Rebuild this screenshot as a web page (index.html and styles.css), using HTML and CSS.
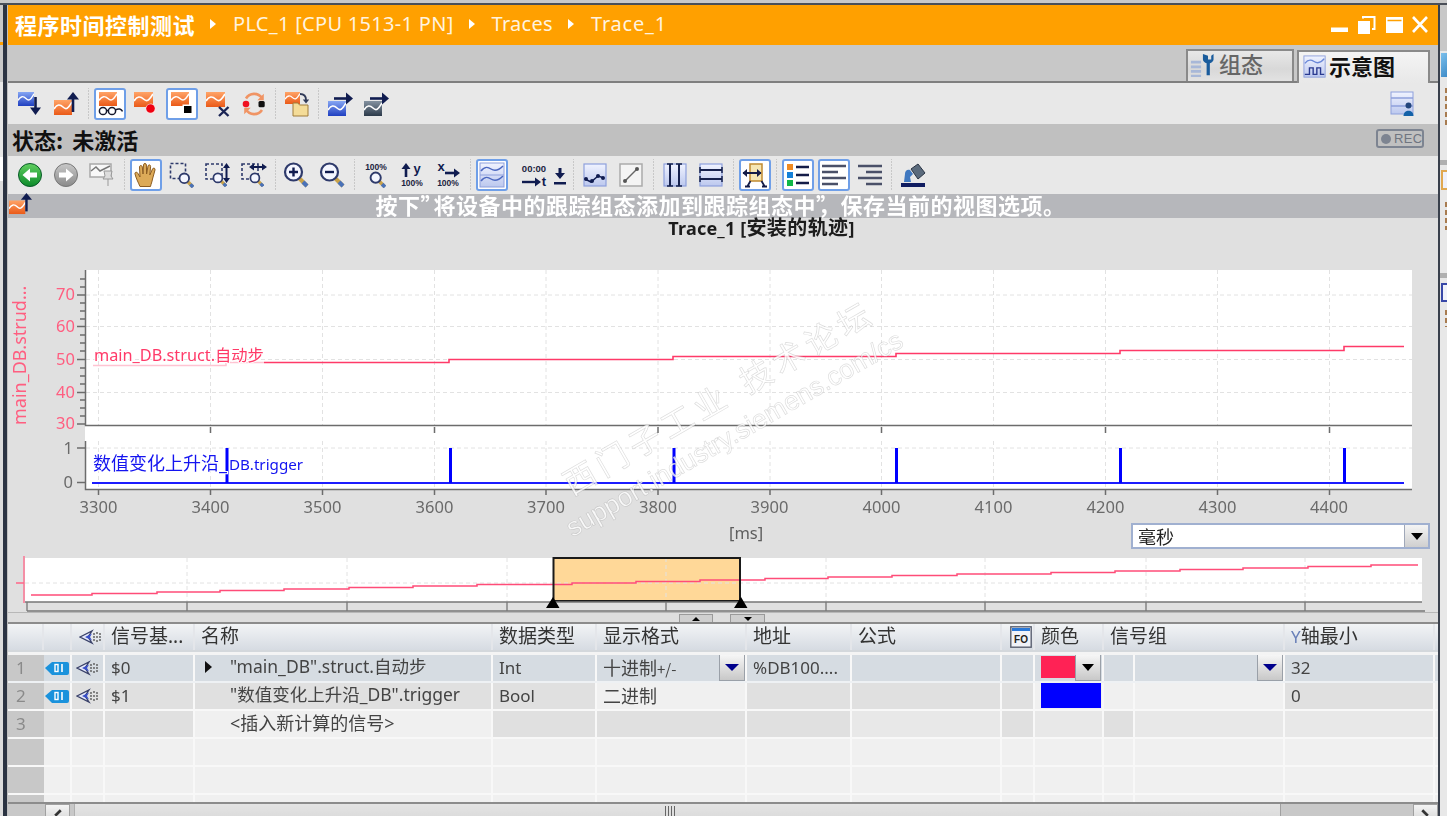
FILE: index.html
```html
<!DOCTYPE html>
<html lang="zh-CN">
<head>
<meta charset="utf-8">
<title>Trace_1</title>
<link rel="stylesheet" href="styles.css">
</head>
<body>
<svg class="sprite" aria-hidden="true">
  <defs>
    <linearGradient id="go" x1="0" y1="0" x2="0" y2="1"><stop offset="0" stop-color="#ffa468"/><stop offset="1" stop-color="#ea5a18"/></linearGradient>
    <linearGradient id="gb" x1="0" y1="0" x2="0" y2="1"><stop offset="0" stop-color="#86a6f4"/><stop offset="1" stop-color="#1f3fc0"/></linearGradient>
    <linearGradient id="gd" x1="0" y1="0" x2="0" y2="1"><stop offset="0" stop-color="#8492a0"/><stop offset="1" stop-color="#2c3a4a"/></linearGradient>
    <linearGradient id="gl" x1="0" y1="0" x2="0" y2="1"><stop offset="0" stop-color="#f0f3ff"/><stop offset="1" stop-color="#bcc8ee"/></linearGradient>
    <linearGradient id="gg" x1="0" y1="0" x2="0" y2="1"><stop offset="0" stop-color="#62d060"/><stop offset="1" stop-color="#0c8a2a"/></linearGradient>
    <linearGradient id="gy" x1="0" y1="0" x2="0" y2="1"><stop offset="0" stop-color="#c8c8c8"/><stop offset="1" stop-color="#8a8a8a"/></linearGradient>
  </defs>
  <symbol id="co" viewBox="0 0 18 15" preserveAspectRatio="none"><rect width="18" height="15" fill="url(#go)"/><path d="M0 9C3 4 6 4 9 7s5 2 9-5" fill="none" stroke="#fff" stroke-width="1.6"/></symbol>
  <symbol id="cb" viewBox="0 0 18 15" preserveAspectRatio="none"><rect width="18" height="15" fill="url(#gb)"/><path d="M0 9C3 4 6 4 9 7s5 2 9-5" fill="none" stroke="#fff" stroke-width="1.6"/></symbol>
  <symbol id="cd" viewBox="0 0 18 15" preserveAspectRatio="none"><rect width="18" height="15" fill="url(#gd)"/><path d="M0 9C3 4 6 4 9 7s5 2 9-5" fill="none" stroke="#fff" stroke-width="1.6"/></symbol>
  <symbol id="mag" viewBox="0 0 14 14"><path d="M8.6 8.6l4.4 4.4" stroke="#c8a24a" stroke-width="3"/><path d="M10.8 10.8l2.4 2.4" stroke="#4a72b8" stroke-width="3"/><circle cx="5.5" cy="5.5" r="4.2" fill="#f4f6ff" stroke="#2e3a6b" stroke-width="1.6"/></symbol>

  <symbol id="i-load" viewBox="0 0 26 26"><use href="#cb" x="1" y="1" width="16" height="14"/><path d="M18.5 6v13" stroke="#101c50" stroke-width="2.6"/><path d="M13 16.5h11l-5.500 7.500z" fill="#101c50"/></symbol>
  <symbol id="i-up" viewBox="0 0 26 26"><use href="#co" x="1" y="9" width="18" height="15"/><path d="M20 7v14" stroke="#101c50" stroke-width="2.600"/><path d="M14 8.500h12L20 1z" fill="#101c50"/></symbol>
  <symbol id="i-glass" viewBox="0 0 26 26"><use href="#co" x="2" y="1" width="18" height="14"/><g fill="#fff" stroke="#15182c" stroke-width="1.500"><circle cx="6" cy="20" r="3.600"/><circle cx="15" cy="20" r="3.600"/></g><path d="M9.500 19.500h2M18.500 19c3-2 6-1 7 1.500" fill="none" stroke="#15182c" stroke-width="1.500"/></symbol>
  <symbol id="i-rec" viewBox="0 0 26 26"><use href="#co" x="1" y="1" width="19" height="15"/><circle cx="18" cy="18" r="5.500" fill="#f4e4e4"/><circle cx="17.500" cy="17.500" r="4.300" fill="#f00010"/></symbol>
  <symbol id="i-stop" viewBox="0 0 26 26"><use href="#co" x="2" y="1" width="18" height="14"/><rect x="13.500" y="13.500" width="10" height="9" fill="#fff"/><rect x="15" y="15" width="7.500" height="7" fill="#000"/></symbol>
  <symbol id="i-del" viewBox="0 0 26 26"><use href="#co" x="1" y="1" width="19" height="15"/><path d="M14 16l9.500 9M23.500 16L14 25" stroke="#1a2454" stroke-width="2.400"/></symbol>
  <symbol id="i-cycle" viewBox="0 0 26 26"><g fill="none" stroke="#f09464" stroke-width="2.600"><path d="M5 7.500A9.500 9.500 0 0 1 21 7"/><path d="M21 19A9.500 9.500 0 0 1 5 18.500"/></g><path d="M22.800 2.800v6.500h-6.500zM3.200 23.200v-6.500h6.500z" fill="#f09464"/><circle cx="5" cy="13" r="3.300" fill="#f01020"/><rect x="17.500" y="10" width="6.200" height="6.200" rx="1.500" fill="#111"/></symbol>
  <symbol id="i-folder" viewBox="0 0 26 26"><use href="#co" x="2" y="1" width="15" height="12"/><path d="M10 12h5l1.500 2H25v11H10z" fill="#f4dc98" stroke="#a07c3a"/><path d="M17 3c4 0 6 2 6 6" fill="none" stroke="#303a58" stroke-width="1.800"/><path d="M19.800 8.500h6.400L23 12.500z" fill="#303a58"/></symbol>
  <symbol id="i-bout" viewBox="0 0 26 26"><use href="#cb" x="1" y="10" width="18" height="15"/><path d="M7 7.500h14" stroke="#101c50" stroke-width="2.600"/><path d="M19 1.500L26 7.500l-7 6z" fill="#101c50"/></symbol>
  <symbol id="i-dout" viewBox="0 0 26 26"><use href="#cd" x="1" y="10" width="18" height="15"/><path d="M7 7.500h14" stroke="#101c50" stroke-width="2.600"/><path d="M19 1.500L26 7.500l-7 6z" fill="#101c50"/></symbol>
  <symbol id="i-layout" viewBox="0 0 26 26"><rect x="1" y="1" width="22" height="22" fill="url(#gl)" stroke="#8ea0dc"/><path d="M1 7h22M1 15h22" stroke="#8ea0dc" stroke-width="1.500"/><circle cx="18.500" cy="14.500" r="3" fill="#23457c"/><path d="M13.500 25c0-7 10-7 10 0z" fill="#1462a8"/></symbol>

  <symbol id="i-back" viewBox="0 0 26 26"><circle cx="13" cy="13" r="11.500" fill="url(#gg)" stroke="#0a5a2a" stroke-width="1"/><path d="M20 10.500h-7V6.500l-7.500 6.500 7.500 6.500v-4h7z" fill="#fff"/></symbol>
  <symbol id="i-fwd" viewBox="0 0 26 26"><circle cx="13" cy="13" r="11.500" fill="url(#gy)" stroke="#777" stroke-width="1"/><path d="M6 10.500h7V6.500l7.500 6.500-7.500 6.500v-4H6z" fill="#fff"/></symbol>
  <symbol id="i-pin" viewBox="0 0 26 26"><rect x="1" y="2" width="21" height="13" fill="#f8f8f8" stroke="#a8a8a8" stroke-width="1.500"/><path d="M2 9l5-4 4 4 4-2 6-3" fill="none" stroke="#777" stroke-width="1.500"/><path d="M15 9h8l-1 5 2 3H14l2-3zM19 17v7" fill="#ddd" stroke="#999"/></symbol>
  <symbol id="i-hand" viewBox="0 0 26 26"><path d="M7 24.500C5 20 3 16 2 12c-.5-2 2-2.500 3-.5L7 15 6.500 5c0-2 2.500-2 2.800 0L10 12l.5-9.200c.2-1.800 2.800-1.800 2.900.2l.2 9L15 4c.4-1.700 2.800-1.400 2.600.6L16.800 13l2.700-6c.7-1.600 2.900-1 2.500 1l-2.500 9c-.5 3-1.500 5-2 7.500z" fill="#dcaa58" stroke="#8c5c20" stroke-width="1"/></symbol>
  <symbol id="i-zbox" viewBox="0 0 26 26"><rect x="1.500" y="1.500" width="15" height="15" fill="none" stroke="#2e3a6b" stroke-width="1.600" stroke-dasharray="3 2"/><use href="#mag" x="9" y="10" width="16" height="16"/></symbol>
  <symbol id="i-zy" viewBox="0 0 26 26"><rect x="1" y="2" width="16" height="15" fill="none" stroke="#2e3a6b" stroke-width="1.600" stroke-dasharray="3 2"/><use href="#mag" x="7" y="10" width="15" height="15"/><path d="M21.500 4v14" stroke="#101c50" stroke-width="2"/><path d="M18 6l3.500-5 3.500 5zM18 16l3.500 5 3.500-5z" fill="#101c50"/></symbol>
  <symbol id="i-zx" viewBox="0 0 26 26"><rect x="1" y="2" width="16" height="15" fill="none" stroke="#2e3a6b" stroke-width="1.600" stroke-dasharray="3 2"/><use href="#mag" x="8" y="10" width="15" height="15"/><path d="M11 5h13" stroke="#101c50" stroke-width="2"/><path d="M13 1.500L8 5l5 3.500zM21 1.500L26 5l-5 3.500z" fill="#101c50"/></symbol>
  <symbol id="i-zin" viewBox="0 0 26 26"><path d="M16 16l8 8" stroke="#c8a24a" stroke-width="4"/><path d="M20 20l4 4" stroke="#4a72b8" stroke-width="4"/><circle cx="10.500" cy="10" r="8.500" fill="#f4f6ff" stroke="#2e3a6b" stroke-width="2.200"/><path d="M6 10h9M10.500 5.500v9" stroke="#101c50" stroke-width="2.400"/></symbol>
  <symbol id="i-zout" viewBox="0 0 26 26"><path d="M16 16l8 8" stroke="#c8a24a" stroke-width="4"/><path d="M20 20l4 4" stroke="#4a72b8" stroke-width="4"/><circle cx="10.500" cy="10" r="8.500" fill="#f4f6ff" stroke="#2e3a6b" stroke-width="2.200"/><path d="M6 10h9" stroke="#101c50" stroke-width="2.400"/></symbol>
  <symbol id="i-wave" viewBox="0 0 26 26"><rect x="1" y="1" width="24" height="24" fill="url(#gl)" stroke="#8ea0dc"/><path d="M2 9c4-5 7-4 10-2s7 2 12-3M2 19c4-5 7-4 10-2s7 2 12-3" fill="none" stroke="#4c68c0" stroke-width="1.500"/><path d="M1 13h24" stroke="#8ea0dc"/></symbol>
  <symbol id="i-dl" viewBox="0 0 14 26"><path d="M7 6v8" stroke="#101c50" stroke-width="3"/><path d="M2 11h10l-5 6zM1 20h12v2.500H1z" fill="#101c50"/></symbol>
  <symbol id="i-pts" viewBox="0 0 26 26"><rect x="2" y="2" width="22" height="22" fill="url(#gl)" stroke="#8ea0dc" stroke-width="1.200"/><path d="M3 17l6 3 7-6 6 2" fill="none" stroke="#101c50" stroke-width="1.500"/><circle cx="4" cy="17" r="2" fill="#101c50"/><circle cx="10" cy="19" r="2" fill="#101c50"/><circle cx="16" cy="14" r="2" fill="#101c50"/><circle cx="21" cy="16" r="2" fill="#101c50"/></symbol>
  <symbol id="i-line" viewBox="0 0 26 26"><rect x="2" y="2" width="22" height="22" fill="#f4f4f4" stroke="#aaa" stroke-width="1.500"/><path d="M7 19L19 7" stroke="#666" stroke-width="1.500"/><circle cx="7" cy="19" r="2" fill="#555"/><circle cx="19" cy="7" r="2" fill="#555"/></symbol>
  <symbol id="i-vr" viewBox="0 0 26 26"><rect x="2" y="2" width="22" height="22" fill="url(#gl)" stroke="#8ea0dc" stroke-width="1.200"/><path d="M8 2v22M17 2v22" stroke="#15204c" stroke-width="2"/><path d="M5 2h6M5 24h6M14 2h6M14 24h6" stroke="#15204c" stroke-width="1.500"/></symbol>
  <symbol id="i-hr" viewBox="0 0 26 26"><rect x="2" y="2" width="22" height="22" fill="url(#gl)" stroke="#8ea0dc" stroke-width="1.200"/><path d="M2 8h22M2 17h22" stroke="#15204c" stroke-width="2"/><path d="M2 5v6M24 5v6M2 14v6M24 14v6" stroke="#15204c" stroke-width="1.500"/></symbol>
  <symbol id="i-move" viewBox="0 0 26 26"><path d="M8 2h12v17H8z" fill="#f6e6b4" stroke="#c08a30" stroke-width="1.500"/><path d="M1 11h18" stroke="#141c48" stroke-width="2"/><path d="M5 7l-4.500 4L5 15zM15 7l4.500 4L15 15z" fill="#141c48"/><path d="M5 25l3.500-6M23 25l-3.500-6M3 24.500h5M20 24.500h5" stroke="#141c48" stroke-width="1.800"/></symbol>
  <symbol id="i-list" viewBox="0 0 26 26"><rect x="2" y="2" width="6" height="6" fill="#f08a20"/><rect x="2" y="10" width="6" height="6" fill="#1480d8"/><rect x="2" y="18" width="6" height="6" fill="#10b848"/><path d="M11 5h13M11 13h13M11 21h13" stroke="#141c48" stroke-width="2.600"/></symbol>
  <symbol id="i-al" viewBox="0 0 26 26"><path d="M1 4h24M1 10h16M1 16h24M1 22h16" stroke="#4a5068" stroke-width="2.400"/></symbol>
  <symbol id="i-ar" viewBox="0 0 26 26"><path d="M1 4h24M9 10h16M1 16h24M9 22h16" stroke="#4a5068" stroke-width="2.400"/></symbol>
  <symbol id="i-paint" viewBox="0 0 26 26"><path d="M11 7l7-5 7 9-7 6z" fill="#5a6a7c" stroke="#2a3444"/><path d="M5 12c0-3 2-5 5-4l3 4-3 3 1 5H4z" fill="#3f78c0"/><rect x="1" y="21" width="24" height="4" fill="#101c60"/></symbol>

  <symbol id="i-conf" viewBox="0 0 26 26"><path d="M1 10h11M1 15h11M1 20h11M1 25h11" stroke="#a8b8d8" stroke-width="3"/><path d="M14 1v6c0 2 2 3.500 4 4v13h3.500V11c2-.5 4-2 4-4V1l-2.500 2v4h-3.500V3z" fill="#1a5c9c"/></symbol>
  <symbol id="i-sch" viewBox="0 0 26 26"><rect x="1" y="1" width="23" height="23" fill="url(#gl)" stroke="#8ea0dc"/><path d="M2 9c4-5 7-4 10-2s7 2 11-3" fill="none" stroke="#6a88d8" stroke-width="1.500"/><path d="M2 21h5v-7h4v7h4v-7h4v7h4" fill="none" stroke="#2a3a90" stroke-width="1.500"/></symbol>
  <symbol id="i-tag" viewBox="0 0 24 14"><path d="M0 7l7-6h15a2 2 0 0 1 2 2v9a2 2 0 0 1-2 2H7z" fill="#1a92dc"/><rect x="10" y="3.500" width="3" height="7" fill="none" stroke="#fff" stroke-width="1.400"/><path d="M17 3v8" stroke="#fff" stroke-width="1.600"/></symbol>
  <symbol id="i-cast" viewBox="0 0 24 16"><path d="M1 8l12-6-4 6 4 6z" fill="#e4e8fa" stroke="#384068" stroke-width="1.300"/><path d="M6 8l7-3.500-2 3.500 2 3.500z" fill="#3a50c8"/><g fill="#555"><circle cx="15" cy="5" r=".9"/><circle cx="15" cy="8" r=".9"/><circle cx="15" cy="11" r=".9"/><circle cx="18" cy="4" r=".9"/><circle cx="18" cy="8" r=".9"/><circle cx="18" cy="12" r=".9"/><circle cx="21" cy="5" r=".9"/><circle cx="21" cy="8" r=".9"/><circle cx="21" cy="11" r=".9"/></g></symbol>
</svg>

<div class="top-strip"></div>
<div class="shell">
  <div class="rail-left">
    <div class="rl-a"></div><div class="rl-b"></div><div class="rl-c"></div><div class="rl-d"></div><div class="rl-e"></div><div class="rl-f"></div>
  </div>

  <main class="main">
    <header class="titlebar">
      <span class="t-main">程序时间控制测试</span><i class="crumb-sep"></i><span class="t-crumb">PLC_1 [CPU 1513-1 PN]</span><i class="crumb-sep"></i><span class="t-crumb">Traces</span><i class="crumb-sep"></i><span class="t-crumb t-last">Trace_1</span>
      <svg class="winctl" viewBox="0 0 98 18" width="98" height="18"><path d="M0 11.500h17V16H0z" fill="#fff"/><path d="M27 5h12v13H27z" fill="#fff"/><path d="M32 2.500V1h11.500v12H41" fill="none" stroke="#fff" stroke-width="2"/><path d="M55 1h17v16H55z" fill="#fff"/><path d="M56.500 4.500h14" stroke="#ffa000" stroke-width="1.500"/><path d="M82 1l14 15M96 1L82 16" stroke="#fff" stroke-width="2.600"/></svg>
    </header>

    <nav class="tabs">
      <div class="tab"><svg class="tab-ic"><use href="#i-conf"/></svg>组态</div>
      <div class="tab tab-on"><svg class="tab-ic"><use href="#i-sch"/></svg>示意图</div>
    </nav>

    <div class="tools t1">
      <span class="tb"><svg><use href="#i-load"/></svg></span>
      <span class="tb"><svg><use href="#i-up"/></svg></span>
      <i class="sep"></i>
      <span class="tb on"><svg><use href="#i-glass"/></svg></span>
      <span class="tb"><svg><use href="#i-rec"/></svg></span>
      <span class="tb on"><svg><use href="#i-stop"/></svg></span>
      <span class="tb"><svg><use href="#i-del"/></svg></span>
      <span class="tb"><svg><use href="#i-cycle"/></svg></span>
      <i class="sep s6"></i>
      <span class="tb"><svg><use href="#i-folder"/></svg></span>
      <i class="sep"></i>
      <span class="tb"><svg><use href="#i-bout"/></svg></span>
      <span class="tb"><svg><use href="#i-dout"/></svg></span>
      <span class="tb tb-end"><svg><use href="#i-layout"/></svg></span>
    </div>

    <div class="status">
      <span class="st-text">状态: 未激活</span>
      <span class="rec"><i class="rec-dot"></i>REC</span>
    </div>

    <div class="tools t2">
      <span class="tb"><svg><use href="#i-back"/></svg></span>
      <span class="tb"><svg><use href="#i-fwd"/></svg></span>
      <span class="tb"><svg><use href="#i-pin"/></svg></span>
      <i class="sep"></i>
      <span class="tb on"><svg><use href="#i-hand"/></svg></span>
      <span class="tb"><svg><use href="#i-zbox"/></svg></span>
      <span class="tb"><svg><use href="#i-zy"/></svg></span>
      <span class="tb"><svg><use href="#i-zx"/></svg></span>
      <i class="sep s6"></i>
      <span class="tb"><svg><use href="#i-zin"/></svg></span>
      <span class="tb"><svg><use href="#i-zout"/></svg></span>
      <i class="sep"></i>
      <span class="tb"><svg viewBox="0 0 26 26"><text x="13" y="8" class="ic-t">100%</text><use href="#mag" x="6" y="9" width="17" height="17"/></svg></span>
      <span class="tb"><svg viewBox="0 0 26 26"><text x="13" y="24" class="ic-t">100%</text><path d="M7 5v10" stroke="#101c50" stroke-width="2.600"/><path d="M2.500 7L7 1l4.500 6z" fill="#101c50"/><text x="18" y="11" class="ic-l">y</text></svg></span>
      <span class="tb"><svg viewBox="0 0 26 26"><text x="13" y="24" class="ic-t">100%</text><path d="M10 11h11" stroke="#101c50" stroke-width="2.600"/><path d="M19 6.500l6 4.500-6 4.500z" fill="#101c50"/><text x="6" y="9" class="ic-l">x</text></svg></span>
      <i class="sep"></i>
      <span class="tb on"><svg><use href="#i-wave"/></svg></span>
      <span class="tb tb-time"><svg viewBox="0 0 26 26"><text x="13" y="10" class="ic-t ic-w">00:00</text><path d="M1 20h15" stroke="#101c50" stroke-width="2.400"/><path d="M14 15.500l6 4.500-6 4.500z" fill="#101c50"/><text x="23" y="24" class="ic-l">t</text></svg><svg class="dl"><use href="#i-dl"/></svg></span>
      <i class="sep"></i>
      <span class="tb"><svg><use href="#i-pts"/></svg></span>
      <span class="tb"><svg><use href="#i-line"/></svg></span>
      <i class="sep"></i>
      <span class="tb"><svg><use href="#i-vr"/></svg></span>
      <span class="tb"><svg><use href="#i-hr"/></svg></span>
      <i class="sep"></i>
      <span class="tb on"><svg><use href="#i-move"/></svg></span>
      <i class="sep s7"></i>
      <span class="tb on"><svg><use href="#i-list"/></svg></span>
      <span class="tb on"><svg><use href="#i-al"/></svg></span>
      <span class="tb"><svg><use href="#i-ar"/></svg></span>
      <i class="sep s7"></i>
      <span class="tb"><svg><use href="#i-paint"/></svg></span>
    </div>

    <div class="hint"><svg class="hint-ic"><use href="#i-up"/></svg>按下<span class="q">”</span>将设备中的跟踪组态添加到跟踪组态中<span class="q">”</span>，保存当前的视图选项。</div>

    <section class="chart">
      <div class="chart-title">Trace_1 [<span class="ct-cjk">安装的轨迹</span>]</div>

      <svg class="plots" viewBox="8 238 1430 284" width="1430" height="284">
        <rect x="86" y="270" width="1326" height="155" fill="#fff"/>
        <rect x="85" y="425" width="1327" height="64" fill="#fff"/>
        <g class="grid">
          <path d="M86 295H1412M86 326.500H1412M86 359.500H1412M86 392.500H1412M86 448H1412"/>
          <path d="M98.500 270V425M210.500 270V425M322.500 270V425M434.500 270V425M546 270V425M658 270V425M770 270V425M881.500 270V425M993.500 270V425M1105.500 270V425M1217.500 270V425M1329.500 270V425"/>
          <path d="M98.500 441V489M210.500 441V489M322.500 441V489M434.500 441V489M546 441V489M658 441V489M770 441V489M881.500 441V489M993.500 441V489M1105.500 441V489M1217.500 441V489M1329.500 441V489"/>
        </g>
        <g class="axis">
          <path d="M85.500 270V425.500H1412M85.500 441V489.500H1412"/>
          <path d="M77 295h8M77 326.500h8M77 359.500h8M77 392.500h8M77 424h8M80 279h5M80 287h5M80 303h5M80 311h5M80 319h5M80 335h5M80 343h5M80 351h5M80 368h5M80 376h5M80 384h5M80 400h5M80 408h5M80 416h5M77 448h8M77 482.500h8"/>
          <path d="M210.500 427v6M434.500 427v6M658 427v6M881.500 427v6M1105.500 427v6M1329.500 427v6"/>
          <path d="M98.500 490v5M210.500 490v5M322.500 490v5M434.500 490v5M546 490v5M658 490v5M770 490v5M881.500 490v5M993.500 490v5M1105.500 490v5M1217.500 490v5M1329.500 490v5"/>
        </g>
        <path class="pink-faint" d="M93 365.500H226V362.500H264"/>
        <path class="pink" d="M264 362.500H449V359.500H673V356.500H896V353.500H1120V350.500H1344V346.500H1404"/>
        <text class="lbl-pink" x="94" y="361">main_DB.struct.自动步</text>
        <g class="ynum">
          <text x="75" y="300">70</text><text x="75" y="332">60</text><text x="75" y="365">50</text><text x="75" y="398">40</text><text x="75" y="429">30</text>
        </g>
        <text class="yname" transform="translate(26 425) rotate(-90)">main_DB.strud...</text>
        <path class="blue" d="M92 483H1404"/>
        <path class="spike" d="M227 448V483M450.500 448V483M674 448V483M896.500 448V483M1120.500 448V483M1344.500 448V483"/>
        <text class="lbl-blue" x="93" y="470"><tspan class="cjk">数值变化上升沿_</tspan><tspan x="229">DB.trigger</tspan></text>
        <g class="xnum">
          <text x="73" y="454" class="nleft">1</text><text x="73" y="488" class="nleft">0</text>
          <text x="98.500" y="513">3300</text><text x="210.500" y="513">3400</text><text x="322.500" y="513">3500</text><text x="434.500" y="513">3600</text><text x="546" y="513">3700</text><text x="658" y="513">3800</text><text x="769.500" y="513">3900</text><text x="881.500" y="513">4000</text><text x="993.500" y="513">4100</text><text x="1105.500" y="513">4200</text><text x="1217.500" y="513">4300</text><text x="1329" y="513">4400</text>
        </g>
      </svg>

      <div class="unit-row">
        <span class="unit">[ms]</span>
        <div class="combo"><span class="combo-v">毫秒</span><span class="combo-b"><i class="tri-k"></i></span></div>
      </div>

      <svg class="over" viewBox="8 552 1430 60" width="1430" height="60">
        <rect x="25" y="558" width="1397" height="44" fill="#fff"/>
        <rect x="553.500" y="558" width="186.500" height="43" fill="#ffd898"/>
        <g class="grid">
          <path d="M25 583H1422M187 558V602M347 558V602M507 558V602M666 558V602M826 558V602M985 558V602M1146 558V602M1305 558V602"/>
        </g>
        <path class="pink-s" d="M31 595H92V593.500H157V592H220V590.500H284V589H349V587.500H413V586H477V584.500H572V583H636V581.500H700V580H765V578.500H828V577H892V575.500H957V574H1051V572.500H1115V571H1180V569.500H1243V568H1308V566.500H1371V565H1418"/>
        <path class="pink-ax" d="M24 556V603M16 583H24"/>
        <path class="sel" d="M553.500 558H740V601H553.500Z"/>
        <path class="rul" d="M25 602H1422M27 611H1425M27 602v9M187 602v9M347 602v9M507 602v9M666 602v9M826 602v9M985 602v9M1146 602v9M1305 602v9"/>
        <path d="M553 597l-7 11h13.500zM741 597l-7 11h13.500z" fill="#000"/>
      </svg>

      <div class="split">
        <span class="sp-btn sp-a"><i class="tri-u"></i></span><span class="sp-btn sp-b"><i class="tri-k tri-s"></i></span>
      </div>

      <svg class="mark" viewBox="0 0 420 130" width="420" height="130">
        <text x="6" y="40" class="m1">西门子工业<tspan dx="16">技术论坛</tspan></text>
        <text x="-14" y="76" class="m2">support.industry.siemens.com/cs</text>
      </svg>
    </section>

    <section class="table">
      <div class="row head">
        <div class="c rh"></div><div class="c"></div><div class="c ctr"><svg class="cast"><use href="#i-cast"/></svg></div><div class="c">信号基...</div><div class="c">名称</div><div class="c">数据类型</div><div class="c">显示格式</div><div class="c">地址</div><div class="c">公式</div><div class="c ctr"><svg class="fo" viewBox="0 0 22 22"><rect x=".8" y=".8" width="20.400" height="20.400" fill="#f0f2f8" stroke="#5a6070" stroke-width="1.400"/><rect x="2" y="2" width="18" height="3" fill="#2a78d8"/><text x="11" y="17" class="ic-f">FO</text></svg></div><div class="c">颜色</div><div class="c g2">信号组</div><div class="c"><span class="y">Y</span>轴最小</div>
      </div>
      <div class="gapline"></div>
      <div class="row sel-row">
        <div class="c rh">1</div><div class="c ctr"><svg class="tag"><use href="#i-tag"/></svg></div><div class="c ctr"><svg class="cast"><use href="#i-cast"/></svg></div><div class="c">$0</div><div class="c name"><i class="tri-r"></i><span>"main_DB".struct.自动步</span></div><div class="c">Int</div><div class="c sb"><span class="cj">十进制<small>+/-</small></span><span class="dd"><i class="tri-n"></i></span></div><div class="c">%DB100....</div><div class="c"></div><div class="c"></div><div class="c colr"><i class="sw sw-p"></i><span class="dd"><i class="tri-k"></i></span></div><div class="c"></div><div class="c end"><span class="dd"><i class="tri-n"></i></span></div><div class="c">32</div>
      </div>
      <div class="row">
        <div class="c rh">2</div><div class="c d ctr"><svg class="tag"><use href="#i-tag"/></svg></div><div class="c d ctr"><svg class="cast"><use href="#i-cast"/></svg></div><div class="c d">$1</div><div class="c d name ind">"数值变化上升沿_DB".trigger</div><div class="c d">Bool</div><div class="c l cj">二进制</div><div class="c d"></div><div class="c d"></div><div class="c d"></div><div class="c colr l"><i class="sw sw-b"></i></div><div class="c l"></div><div class="c l"></div><div class="c d">0</div>
      </div>
      <div class="row">
        <div class="c rh">3</div><div class="c d"></div><div class="c d"></div><div class="c d"></div><div class="c l name ind ins">&lt;插入新计算的信号&gt;</div><div class="c d"></div><div class="c d"></div><div class="c d"></div><div class="c m"></div><div class="c d"></div><div class="c m"></div><div class="c d"></div><div class="c m"></div><div class="c m"></div>
      </div>
      <div class="row"><div class="c rh"></div><div class="c l"></div><div class="c l"></div><div class="c l"></div><div class="c l"></div><div class="c l"></div><div class="c l"></div><div class="c l"></div><div class="c l"></div><div class="c l"></div><div class="c l"></div><div class="c l"></div><div class="c l"></div><div class="c l"></div></div>
      <div class="row"><div class="c rh"></div><div class="c l"></div><div class="c l"></div><div class="c l"></div><div class="c l"></div><div class="c l"></div><div class="c l"></div><div class="c l"></div><div class="c l"></div><div class="c l"></div><div class="c l"></div><div class="c l"></div><div class="c l"></div><div class="c l"></div></div>
      <div class="row"><div class="c rh"></div><div class="c l"></div><div class="c l"></div><div class="c l"></div><div class="c l"></div><div class="c l"></div><div class="c l"></div><div class="c l"></div><div class="c l"></div><div class="c l"></div><div class="c l"></div><div class="c l"></div><div class="c l"></div><div class="c l"></div></div>
    </section>

    <div class="hscroll">
      <div class="hs-pad"></div>
      <div class="hs-btn"><svg viewBox="0 0 25 14" width="25" height="14"><path d="M16 5l-6 6" fill="none" stroke="#333" stroke-width="3"/></svg></div>
      <div class="hs-thumb"><i class="grip"></i></div>
      <div class="hs-rest"></div>
      <div class="hs-btn"><svg viewBox="0 0 25 14" width="25" height="14"><path d="M9 5l6 6" fill="none" stroke="#333" stroke-width="3"/></svg></div>
    </div>
  </main>

  <aside class="rail-right">
    <div class="rr-head"></div>
    <div class="rr-ic rr-blue"></div>
    <div class="rr-txt rr-t1"></div>
    <div class="rr-band"></div>
    <div class="rr-ic rr-doc"></div>
    <div class="rr-txt rr-t2"></div>
    <div class="rr-band rr-b2"></div>
    <div class="rr-ic rr-frame"></div>
    <div class="rr-txt rr-t3"></div>
  </aside>
</div>
</body>
</html>
```

FILE: styles.css
```css
* { box-sizing: border-box; }
html, body { margin: 0; padding: 0; }
body {
  width: 1447px;
  height: 816px;
  overflow: hidden;
  background: #e0e0e0;
  font-family: "Noto Sans", "Noto Sans CJK SC", sans-serif;
  color: #333;
  filter: blur(0.35px);
}
.sprite { position: absolute; width: 0; height: 0; }
i { display: block; font-style: normal; }

.ic-t { font: bold 8.500px "Liberation Sans", sans-serif; fill: #1c2440; text-anchor: middle; }
.ic-w { font-size: 9.500px; }
.ic-l { font: bold 13px "Liberation Sans", sans-serif; fill: #101c50; text-anchor: middle; }
.ic-f { font: bold 10px "Liberation Sans", sans-serif; fill: #222; text-anchor: middle; }

.top-strip { height: 5px; background: #c8c8c8; border-bottom: 2px solid #4a4f58; }
.shell { display: flex; height: 811px; }

.rail-left { width: 8px; border-right: 1px solid #c0c0c0; display: flex; flex-direction: column; background: #2b3342; }
.rail-left > div { width: 3px; }
.rl-a { height: 37px; background: #c8c8c8; }
.rl-b { height: 3px; background: #ffa000; }
.rl-c { height: 37px; background: #c8c8c8; }
.rl-d { height: 75px; background: #e8e8e8; }
.rl-e { height: 24px; background: #fff; }
.rl-f { flex: 1; background: #dcdcdc; }

.main { width: 1430px; display: flex; flex-direction: column; }

.titlebar { height: 40px; flex: none; background: #ffa000; color: #fff; display: flex; align-items: center; padding: 0 9px 3px 7px; }
.t-main { font-size: 22px; letter-spacing: .5px; font-weight: 700; font-family: "Noto Sans CJK SC", sans-serif; white-space: nowrap; line-height: 1; }
.t-crumb { font-size: 20px; letter-spacing: .3px; white-space: nowrap; line-height: 1; color: #fff3df; }
.t-last { letter-spacing: .8px; }
.crumb-sep { width: 0; height: 0; margin: 0 17px 0 15px; border-left: 6px solid #fff; border-top: 5px solid transparent; border-bottom: 5px solid transparent; }
.winctl { margin-left: auto; flex: none; margin-top: 3px; }

.tabs { height: 38px; flex: none; background: #c8c8c8; border-bottom: 2px solid #7f7f7f; display: flex; justify-content: flex-end; align-items: flex-end; padding-right: 8px; }
.tab { width: 108px; height: 32px; margin-right: 3px; border: 2px solid #8a8a8a; border-bottom: 0; background: linear-gradient(#e8e8e8, #d8d8d8 60%, #e2e2e2); color: #666; font-size: 22px; font-family: "Noto Sans CJK SC", sans-serif; font-weight: 500; display: flex; align-items: center; padding: 0 0 6px 2px; gap: 5px; line-height: 1; }
.tab-on { width: 133px; height: 33px; margin: 0 0 -2px; background: linear-gradient(#f4f4f4, #e8e8e8); color: #111; font-weight: 700; border-color: #8a8a8a; padding-left: 4px; gap: 2px; }
.tab-ic { width: 24px; height: 24px; flex: none; margin-top: 4px; }

.tools { display: flex; align-items: center; flex: none; background: #e8e8e8; padding-left: 4px; }
.t1 { height: 41px; padding-right: 22px; }
.t2 { height: 38px; }
.tb { width: 36px; height: 32px; flex: none; display: flex; align-items: center; justify-content: center; }
.tb svg { width: 26px; height: 26px; display: block; overflow: visible; }
.tb.on svg { width: 32px; height: 32px; padding: 1px; background: #fff; border: 2px solid #6f9fe8; border-radius: 3px; }
.tb-end { margin-left: auto; width: 26px; }
.tb-time { width: 59px; justify-content: flex-start; padding-left: 11px; gap: 6px; }
.tb .dl { width: 14px; }
.sep { width: 8px; height: 32px; flex: none; background: linear-gradient(#a8a8a8 50%, transparent 50%) center / 1px 3px repeat-y; }
.s6 { width: 6px; }
.s7 { width: 7px; }

.status { height: 32px; flex: none; background: #c0c0c0; display: flex; align-items: center; justify-content: space-between; padding: 0 14px 3px 4px; }
.st-text { font-family: "Noto Sans CJK SC", sans-serif; font-size: 22px; font-weight: 700; color: #111; line-height: 1; white-space: nowrap; word-spacing: 4px; }
.rec { width: 48px; height: 19px; border: 2px solid #7d8491; border-radius: 3px; display: flex; align-items: center; gap: 3px; padding-left: 3px; font: 13px "Liberation Sans", sans-serif; color: #6f7580; letter-spacing: .3px; }
.rec-dot { width: 10px; height: 10px; border-radius: 50%; background: #7d8491; flex: none; }

.hint { height: 24px; flex: none; position: relative; background: #b6b7bb; color: #fff; font-family: "Noto Sans CJK SC", sans-serif; font-weight: 700; font-size: 22px; letter-spacing: .5px; line-height: 20px; text-align: center; padding-right: 5px; white-space: nowrap; }
.q { letter-spacing: -9px; }
.hint-ic { position: absolute; left: 0; top: -2px; width: 24px; height: 24px; }

.chart { position: relative; flex: none; background: #e0e0e0; }
.chart-title { height: 20px; line-height: 20px; text-align: center; font-size: 18px; font-weight: 700; color: #1c1c1c; padding-left: 77px; white-space: nowrap; letter-spacing: .2px; }
.ct-cjk { font-size: 20px; letter-spacing: .4px; }
.plots, .over { display: block; }

.grid path { fill: none; stroke: #e2e2e2; stroke-width: 1; stroke-dasharray: 4 3; }
.axis path { fill: none; stroke: #6c6c6c; stroke-width: 1.500; }
.pink { fill: none; stroke: #ff3a68; stroke-width: 1.600; }
.pink-faint { fill: none; stroke: #ffc4d2; stroke-width: 1.500; }
.pink-s { fill: none; stroke: #ff4c78; stroke-width: 1.500; }
.pink-ax { fill: none; stroke: #ff6688; stroke-width: 1.300; }
.blue { fill: none; stroke: #1c1cff; stroke-width: 2; }
.spike { fill: none; stroke: #0000ff; stroke-width: 3; }
.lbl-pink { font-size: 16.300px; fill: #ff3a68; paint-order: stroke; stroke: #fff; stroke-width: 2px; }
.lbl-blue { font-size: 15.200px; fill: #1414f0; paint-order: stroke; stroke: #fff; stroke-width: 2px; }
.lbl-blue .cjk { font-size: 18px; }
.ynum text { font-size: 16.500px; fill: #ff5e80; text-anchor: end; }
.yname { font-size: 18px; fill: #ff5e80; }
.xnum text { font-size: 16.500px; fill: #6a6a6a; text-anchor: middle; }
.xnum text.nleft { text-anchor: end; }
.sel { fill: none; stroke: #1a1a1a; stroke-width: 2; }
.rul { fill: none; stroke: #777; stroke-width: 1.300; }

.unit-row { height: 30px; display: grid; grid-template-columns: 1123px 299px; align-items: start; }
.unit { justify-self: start; margin: 0 0 0 721px; font-size: 16.500px; color: #5e5e5e; line-height: 22px; }
.combo { height: 26px; margin-top: 1px; border: 2px solid #a0b0d0; background: #fff; display: flex; align-items: stretch; justify-content: space-between; }
.combo-v { font-size: 18px; line-height: 22px; padding-left: 5px; color: #222; font-family: "Noto Sans CJK SC", sans-serif; }
.combo-b { width: 24px; background: linear-gradient(#f4f4f4, #cfcfcf); border-left: 1px solid #a0a8b8; display: flex; align-items: center; justify-content: center; }

.tri-k { width: 0; height: 0; border-left: 6px solid transparent; border-right: 6px solid transparent; border-top: 7px solid #000; }
.tri-n { width: 0; height: 0; border-left: 7px solid transparent; border-right: 7px solid transparent; border-top: 7px solid #00008c; }
.tri-s { border-left-width: 4px; border-right-width: 4px; border-top-width: 4px; }
.tri-u { width: 0; height: 0; border-left: 4px solid transparent; border-right: 4px solid transparent; border-bottom: 4px solid #000; }
.tri-r { width: 0; height: 0; border-top: 6px solid transparent; border-bottom: 6px solid transparent; border-left: 7px solid #111; margin: 0 18px 0 10px; flex: none; }

.split { height: 12px; background: #dedede; border-top: 1px solid #b8b8b8; border-bottom: 2px solid #8c8c8c; display: flex; align-items: flex-end; padding-left: 671px; gap: 17px; }
.sp-btn { width: 34px; height: 8px; background: #cfcfcf; border: 1px solid #9a9a9a; border-bottom: 0; display: flex; align-items: center; justify-content: center; }
.sp-b { width: 35px; }

.mark { position: absolute; left: 543px; top: 133px; transform: rotate(-30deg); transform-origin: 50% 50%; overflow: visible; pointer-events: none; }
.m1 { font-family: "Noto Sans CJK SC", sans-serif; font-size: 32px; letter-spacing: 5.500px; fill: #fff; fill-opacity: .78; stroke: #000; stroke-opacity: .14; stroke-width: .7px; }
.m2 { font-family: "Liberation Sans", sans-serif; font-size: 26.500px; fill: #fff; fill-opacity: .78; stroke: #000; stroke-opacity: .14; stroke-width: .7px; }

.table { height: 178px; flex: none; overflow: hidden; background: #f6f6f6; }
.row { display: grid; grid-template-columns: 36px 28px 33px 90px 298px 104px 150px 105px 150px 33px 69px 31px 150px 150px; height: 28px; border-bottom: 2px solid #f8f8f8; font-size: 17px; color: #444; background: #f0f0f0; }
.row.head { height: 26px; border: 0; background: linear-gradient(#f2f4f6, #d6dbe2); color: #333; font-size: 19px; }
.head .c { border-right: 2px solid #e4e6ea; padding-left: 6px; }
.head .rh { background: transparent; }
.g2 { grid-column: span 2; }
.y { color: #6a80b8; font-size: 17px; }
.gapline { height: 5px; background: #f4f4f4; border-top: 2px solid #d4d8dc; }
.c { display: flex; align-items: center; padding: 0 0 2px 6px; white-space: nowrap; line-height: 1; border-right: 2px solid #f8f8f8; min-width: 0; overflow: hidden; }
.ctr { justify-content: center; padding: 0; }
.rh { background: #c8c8c8; color: #8a8a8a; padding-left: 8px; border-right: 0; }
.d { background: #e0e0e0; }
.l { background: #f0f0f0; }
.m { background: #e8e8e8; }
.sel-row { background: #d6dce2; border-bottom-color: #eef1f4; }
.name { padding-left: 0; font-size: 17.500px; }
.ind { padding-left: 35px; }
.ins { font-size: 18px; }
.cj { font-family: "Noto Sans CJK SC", sans-serif; font-size: 18px; }
.cj small { font-size: 15px; }
.sb { justify-content: space-between; padding: 0 0 0 6px; align-items: stretch; }
.sb .cj { align-self: center; margin-bottom: 2px; }
.dd { width: 26px; height: 26px; flex: none; background: linear-gradient(#f6f6f6, #c8c8c8); border: 1px solid #9aa0a8; border-top: 0; display: flex; align-items: center; justify-content: center; }
.end { justify-content: flex-end; padding: 0; align-items: stretch; }
.colr { padding: 0 0 0 6px; align-items: stretch; }
.sw { display: block; flex: none; }
.sw-p { width: 34px; margin: 1px 0 3px; background: #ff2255; }
.sw-b { width: 60px; background: #0000ff; margin-bottom: 1px; }
.cast { width: 24px; height: 16px; }
.fo { width: 22px; height: 22px; }
.tag { width: 24px; height: 14px; }

.hscroll { height: 14px; flex: none; display: flex; background: #c8c8c8; border-top: 2px solid #8c8c8c; overflow: hidden; }
.hs-pad { width: 37px; flex: none; }
.hs-btn { width: 25px; flex: none; background: linear-gradient(#f4f4f4, #e0e0e0); border: 1px solid #a0a0a0; border-bottom: 0; display: flex; justify-content: center; }
.hs-thumb { width: 1207px; margin-left: 4px; flex: none; background: linear-gradient(#e4e4e4, #dcdcdc); border-left: 1px solid #b0b0b0; border-right: 1px solid #a0a0a0; display: flex; justify-content: center; }
.grip { width: 11px; height: 12px; margin: 2px 0 0 -14px; background: repeating-linear-gradient(90deg, #666 0 1px, transparent 1px 3px); }
.hs-rest { flex: 1; }

.rail-right { width: 9px; flex: none; border-left: 2px solid #39404c; background: #e8e8e8; display: flex; flex-direction: column; }
.rr-head { height: 46px; flex: none; background: #c8c8c8; }
.rr-ic { flex: none; margin-left: 1px; }
.rr-blue { height: 24px; margin-top: 2px; background: linear-gradient(135deg, #7cc0ec, #3f8cc8); }
.rr-txt { flex: none; width: 2px; margin-left: 5px; background: repeating-linear-gradient(#a87c50 0 5px, #e8e8e8 5px 8px); }
.rr-t1 { height: 40px; margin-top: 11px; }
.rr-band { height: 5px; flex: none; margin-top: 32px; background: #b0b0b0; }
.rr-doc { height: 20px; margin-top: 5px; background: #eef0fa; border: 2px solid #e0a850; border-right: 0; }
.rr-t2 { height: 28px; margin-top: 12px; }
.rr-b2 { margin-top: 43px; }
.rr-frame { height: 19px; margin-top: 5px; background: #f0f2fa; border: 2px solid #3848a8; border-right: 0; }
.rr-t3 { height: 17px; margin-top: 8px; }
```
